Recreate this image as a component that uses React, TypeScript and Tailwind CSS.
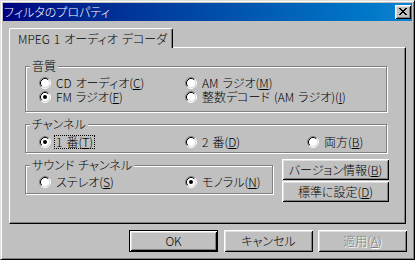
import React from "react";

const BEVEL =
  "shadow-[inset_1px_1px_0_#fff,inset_-1px_-1px_0_#000,inset_2px_2px_0_#dfdfdf,inset_-2px_-2px_0_#808080]";

// slightly wider gap than the CJK font's own space
const SP = "\u2004";

function Radio({ checked }: { checked?: boolean }) {
  return (
    <svg width="12" height="12" viewBox="0 0 12 12" className="shrink-0">
      <circle cx="6" cy="6" r="4.5" fill="#fff" />
      <path d="M2.11 9.89A5.5 5.5 0 0 1 9.89 2.11" fill="none" stroke="#808080" />
      <path d="M9.89 2.11A5.5 5.5 0 0 1 2.11 9.89" fill="none" stroke="#fff" />
      <path d="M2.82 9.18A4.5 4.5 0 0 1 9.18 2.82" fill="none" stroke="#000" />
      <path d="M9.18 2.82A4.5 4.5 0 0 1 2.82 9.18" fill="none" stroke="#dfdfdf" />
      {checked && <circle cx="6" cy="6" r="2" fill="#000" />}
    </svg>
  );
}

function Option({
  checked,
  focus,
  className = "",
  children,
}: {
  checked?: boolean;
  focus?: boolean;
  className?: string;
  children: React.ReactNode;
}) {
  return (
    <div className={`flex h-[14px] items-center ${className}`}>
      <Radio checked={checked} />
      <span
        className={`ml-[4px] px-[1px] leading-[12px] whitespace-nowrap ${
          focus ? "outline outline-1 outline-dotted outline-black" : ""
        }`}
      >
        {children}
      </span>
    </div>
  );
}

function Group({
  title,
  className = "",
  children,
}: {
  title: string;
  className?: string;
  children: React.ReactNode;
}) {
  return (
    <div
      className={`relative border border-[#808080] pl-[13px] shadow-[inset_1px_1px_0_#fff,1px_1px_0_#fff] ${className}`}
    >
      <span className="absolute left-[4px] top-[-8px] bg-[#c0c0c0] px-[2px] leading-[14px]">
        {title}
      </span>
      {children}
    </div>
  );
}

function Button({
  children,
  className = "",
  isDefault,
  disabled,
}: {
  children: React.ReactNode;
  className?: string;
  isDefault?: boolean;
  disabled?: boolean;
}) {
  return (
    <div
      className={`flex items-center justify-center bg-[#c0c0c0] leading-[14px] ${BEVEL} ${
        isDefault ? "border border-black" : ""
      } ${disabled ? "text-[#808080] [text-shadow:1px_1px_0_#fff]" : ""} ${className}`}
    >
      {children}
    </div>
  );
}

export default function App() {
  return (
    <div className="h-[260px] w-[415px] bg-[#c0c0c0] font-['Noto_Sans_CJK_JP','Noto_Sans',sans-serif] text-[12px] font-light text-black [font-feature-settings:'palt']">
      <div className="flex h-full flex-col border border-t-[#dfdfdf] border-l-[#dfdfdf] border-r-black border-b-black p-[2px] shadow-[inset_1px_1px_0_#fff,inset_-1px_-1px_0_#808080]">
        {/* title bar */}
        <div className="flex h-[18px] items-center justify-between bg-linear-to-r from-[#000080] to-[#1084d0] pl-[1px] pr-[1px]">
          <span className="leading-[14px] text-white">フィルタのプロパティ</span>
          <div className={`flex h-[14px] w-[16px] items-center justify-center bg-[#c0c0c0] ${BEVEL}`}>
            <svg width="8" height="7" viewBox="0 0 8 7" shapeRendering="crispEdges" className="-mt-[1px]">
              <path
                fill="#000"
                d="M0 0h2v1H0zM6 0h2v1H6zM1 1h2v1H1zM5 1h2v1H5zM2 2h4v1H2zM3 3h2v1H3zM2 4h4v1H2zM1 5h2v1H1zM5 5h2v1H5zM0 6h2v1H0zM6 6h2v1H6z"
              />
            </svg>
          </div>
        </div>

        {/* tabs */}
        <div className="mx-[6px] mt-[7px] flex flex-col">
          <div className="relative z-10 -mb-px flex h-[20px] w-[164px] items-center rounded-t-[2px] border-t border-r border-l border-t-white border-r-black border-l-white bg-[#c0c0c0] pl-[8px] shadow-[inset_-1px_0_0_#808080]">
            <span className="leading-[14px]">MPEG{SP}1{SP}オーディオ{SP}デコーダ</span>
          </div>
          <div className="flex h-[177px] flex-col border border-t-white border-l-white border-r-black border-b-black pt-[18px] pl-[15px] shadow-[inset_-1px_-1px_0_#808080]">
            <Group title="音質" className="w-[362px] pt-[9px] pb-[7px]">
              <div className="grid grid-cols-[146px_1fr]">
                <Option>
                  CD{SP}オーディオ(<u>C</u>)
                </Option>
                <Option>
                  AM{SP}ラジオ(<u>M</u>)
                </Option>
                <Option checked>
                  FM{SP}ラジオ(<u>F</u>)
                </Option>
                <Option>
                  整数デコード{SP}(AM{SP}ラジオ)(<u>I</u>)
                </Option>
              </div>
            </Group>

            <Group title="チャンネル" className="mt-[12px] w-[362px] pt-[10px] pb-[3px]">
              <div className="flex">
                <Option checked focus className="w-[146px]">
                  1{SP}番(<u>T</u>)
                </Option>
                <Option className="w-[122px]">
                  2{SP}番(<u>D</u>)
                </Option>
                <Option>
                  両方(<u>B</u>)
                </Option>
              </div>
            </Group>

            <div className="mt-[6px] flex items-start">
              <Group title={`サウンド${SP}チャンネル`} className="mt-[6px] w-[248px] pt-[9px] pb-[4px]">
                <div className="flex">
                  <Option className="w-[146px]">
                    ステレオ(<u>S</u>)
                  </Option>
                  <Option checked>
                    モノラル(<u>N</u>)
                  </Option>
                </div>
              </Group>
              <div className="ml-[9px] flex flex-col gap-[1px]">
                <Button className="h-[21px] w-[107px]">
                  バージョン情報(<u>B</u>)
                </Button>
                <Button className="h-[21px] w-[107px]">
                  標準に設定(<u>D</u>)
                </Button>
              </div>
            </div>
          </div>
        </div>

        {/* bottom buttons */}
        <div className="mt-[6px] flex justify-end pr-[5px]">
          <Button isDefault className="h-[22px] w-[89px]">
            OK
          </Button>
          <Button className="ml-[6px] h-[22px] w-[89px]">キャンセル</Button>
          <Button disabled className="ml-[5px] h-[22px] w-[89px]">
            適用(<u>A</u>)
          </Button>
        </div>
      </div>
    </div>
  );
}
